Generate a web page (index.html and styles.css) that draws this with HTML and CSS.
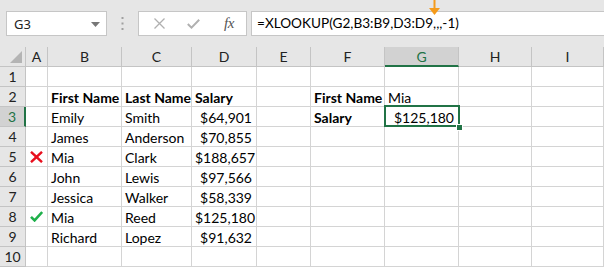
FILE: index.html
```html
<!DOCTYPE html>
<html>
<head>
<meta charset="utf-8">
<link rel="stylesheet" href="styles.css">
</head>
<body>
<div class="toolbar">
  <div class="namebox"><span class="nb-text">G3</span><svg class="nb-arrow" width="9" height="5" viewBox="0 0 9 5"><path d="M0 0H9L4.5 5Z" fill="#777"/></svg></div>
  <div class="dots"><svg width="3" height="13" viewBox="0 0 3 13"><rect x="0.5" y="0" width="2" height="2" fill="#a0a0a0"/><rect x="0.5" y="5.5" width="2" height="2" fill="#a0a0a0"/><rect x="0.5" y="11" width="2" height="2" fill="#a0a0a0"/></svg></div>
  <div class="fxbox">
    <svg class="ico-x" width="11" height="11" viewBox="0 0 11 11"><path d="M0.5 0.5L10.5 10.5M10.5 0.5L0.5 10.5" stroke="#b0b0b0" stroke-width="1.3"/></svg>
    <svg class="ico-ok" width="13" height="10" viewBox="0 0 13 10"><path d="M0.8 5L4.5 8.6L12.2 0.8" stroke="#b0b0b0" stroke-width="2" fill="none"/></svg>
    <span class="fx">fx</span>
  </div>
  <div class="formula">=XLOOKUP(G2,B3:B9,D3:D9,,,-1)</div>
  <svg class="orange-arrow" width="11" height="16" viewBox="0 0 11 16"><path d="M5.5 0V9" stroke="#f49b1c" stroke-width="2"/><path d="M0 8H11L5.5 15Z" fill="#f49b1c"/></svg>
</div>
<div class="sheet">
  <div class="corner"><svg width="12" height="12" viewBox="0 0 12 12"><path d="M12 0V12H0Z" fill="#b4b4b4"/></svg></div>
  <div class="h">A</div><div class="h">B</div><div class="h">C</div><div class="h">D</div><div class="h">E</div><div class="h">F</div><div class="h hs">G</div><div class="h">H</div><div class="h">I</div>

  <div class="r">1</div><div class="c"></div><div class="c"></div><div class="c"></div><div class="c"></div><div class="c"></div><div class="c"></div><div class="c"></div><div class="c"></div><div class="c"></div>

  <div class="r">2</div><div class="c"></div><div class="c b">First Name</div><div class="c b">Last Name</div><div class="c b">Salary</div><div class="c"></div><div class="c b">First Name</div><div class="c">Mia</div><div class="c"></div><div class="c"></div>

  <div class="r rs">3</div><div class="c"></div><div class="c">Emily</div><div class="c">Smith</div><div class="c n">$64,901</div><div class="c"></div><div class="c b">Salary</div><div class="c n sel">$125,180<span class="handle"></span></div><div class="c"></div><div class="c"></div>

  <div class="r">4</div><div class="c"></div><div class="c">James</div><div class="c">Anderson</div><div class="c n">$70,855</div><div class="c"></div><div class="c"></div><div class="c"></div><div class="c"></div><div class="c"></div>

  <div class="r">5</div><div class="c mark"><svg width="13" height="12" viewBox="0 0 13 12"><path d="M1 0.8L12 11.2M12 0.8L1 11.2" stroke="#e8101e" stroke-width="2.4"/></svg></div><div class="c">Mia</div><div class="c">Clark</div><div class="c n">$188,657</div><div class="c"></div><div class="c"></div><div class="c"></div><div class="c"></div><div class="c"></div>

  <div class="r">6</div><div class="c"></div><div class="c">John</div><div class="c">Lewis</div><div class="c n">$97,566</div><div class="c"></div><div class="c"></div><div class="c"></div><div class="c"></div><div class="c"></div>

  <div class="r">7</div><div class="c"></div><div class="c">Jessica</div><div class="c">Walker</div><div class="c n">$58,339</div><div class="c"></div><div class="c"></div><div class="c"></div><div class="c"></div><div class="c"></div>

  <div class="r">8</div><div class="c mark"><svg width="13" height="11" viewBox="0 0 13 11"><path d="M1 5.8L4.6 9.4L12.2 1" stroke="#1fb04b" stroke-width="2.6" fill="none"/></svg></div><div class="c">Mia</div><div class="c">Reed</div><div class="c n">$125,180</div><div class="c"></div><div class="c"></div><div class="c"></div><div class="c"></div><div class="c"></div>

  <div class="r">9</div><div class="c"></div><div class="c">Richard</div><div class="c">Lopez</div><div class="c n">$91,632</div><div class="c"></div><div class="c"></div><div class="c"></div><div class="c"></div><div class="c"></div>

  <div class="r">10</div><div class="c"></div><div class="c"></div><div class="c"></div><div class="c"></div><div class="c"></div><div class="c"></div><div class="c"></div><div class="c"></div><div class="c"></div>
</div>
</body>
</html>
```
FILE: styles.css
```css
* { box-sizing: border-box; }
html, body { margin: 0; padding: 0; }
body {
  width: 604px;
  height: 267px;
  overflow: hidden;
  background: #ffffff;
  font-family: Lato, "Liberation Sans", sans-serif;
  color: #000;
}
.toolbar {
  position: relative;
  height: 47px;
  background: #e6e6e6;
  display: flex;
  align-items: flex-start;
  padding-top: 11px;
}
.namebox {
  margin-left: 6px;
  width: 101px;
  height: 25px;
  background: #fff;
  border: 1px solid #c6c6c6;
  display: flex;
  align-items: center;
  justify-content: space-between;
  padding: 0 6px 0 7px;
}
.nb-text {
  font-family: "Noto Sans", "Open Sans", sans-serif;
  font-size: 13px;
  color: #222;
}
.nb-arrow { margin-top: 1px; }
.dots {
  width: 31px;
  height: 25px;
  display: flex;
  align-items: center;
  justify-content: center;
}
.fxbox {
  width: 109px;
  height: 25px;
  background: #fff;
  border: 1px solid #c6c6c6;
  display: flex;
  align-items: center;
  padding-left: 15px;
}
.ico-x { margin-right: 22px; }
.ico-ok { margin-right: 24px; }
.fx {
  font-family: "Liberation Serif", serif;
  font-style: italic;
  font-size: 15px;
  color: #555;
  letter-spacing: -0.5px;
}
.formula {
  margin-left: 4px;
  flex: 1;
  height: 25px;
  margin-right: -2px;
  background: #fff;
  border: 1px solid #c6c6c6;
  font-size: 13.6px;
  line-height: 23px;
  padding-left: 5px;
  color: #000;
}
.orange-arrow {
  position: absolute;
  left: 429px;
  top: 0;
}
.sheet {
  display: grid;
  grid-template-columns: 26px 22px 74px 70px 65px 54px 74px 74px 73px 72px;
  grid-auto-rows: 20px;
}
.corner {
  background: #e6e6e6;
  border-right: 1px solid #c4c4c4;
  border-bottom: 1px solid #c4c4c4;
  display: flex;
  align-items: flex-end;
  justify-content: flex-end;
  padding: 0 3px 3px 0;
}
.h {
  background: #e6e6e6;
  border-right: 1px solid #c4c4c4;
  border-bottom: 1px solid #c4c4c4;
  text-align: center;
  font-size: 14px;
  line-height: 20px;
  color: #222;
}
.hs {
  background: #d2d2d2;
  border-bottom: 2px solid #217346;
  color: #217346;
}
.r {
  background: #e6e6e6;
  border-right: 1px solid #c4c4c4;
  border-bottom: 1px solid #c4c4c4;
  text-align: center;
  font-size: 14px;
  line-height: 20px;
  color: #222;
}
.rs {
  background: #d2d2d2;
  border-right: 2px solid #217346;
  color: #217346;
}
.c {
  position: relative;
  border-right: 1px solid #d4d4d4;
  border-bottom: 1px solid #d4d4d4;
  font-size: 14px;
  line-height: 19px;
  padding: 1px 3px 0 3px;
  white-space: nowrap;
}
.b { font-weight: bold; }
.n { text-align: right; padding-right: 4px; }
.mark {
  display: flex;
  align-items: center;
  justify-content: center;
  padding: 0 1px 0 0;
}
.sel::after {
  content: "";
  position: absolute;
  left: -1px;
  top: -2px;
  right: -2px;
  bottom: -1px;
  border: 2px solid #217346;
  pointer-events: none;
}
.handle {
  position: absolute;
  right: -5px;
  bottom: -5px;
  width: 7px;
  height: 7px;
  background: #217346;
  border: 1px solid #fff;
  z-index: 2;
}
```
